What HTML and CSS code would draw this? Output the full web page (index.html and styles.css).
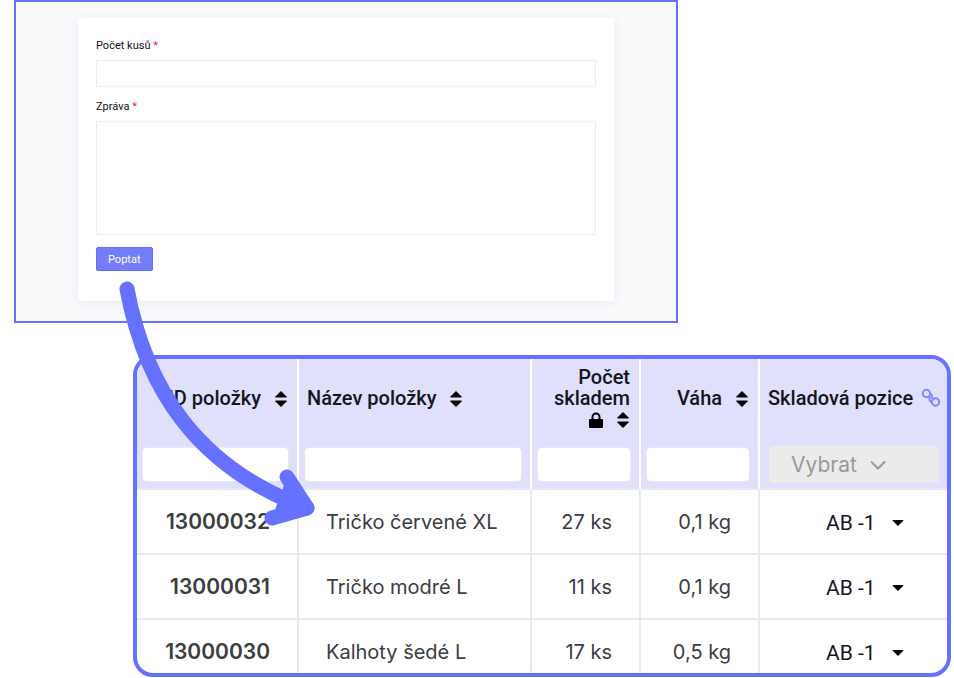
FILE: index.html
```
<!DOCTYPE html>
<html lang="cs">
    <head>
        <meta charset="UTF-8" />
        <meta name="viewport" content="width=device-width, initial-scale=1.0" />
        <title>Poptávka</title>
        <link rel="stylesheet" href="styles.css">
    </head>
    <body>
        <svg class="sprite" aria-hidden="true">
            <symbol id="sort" viewBox="0 0 14 18">
                <path d="M1.500 7 7 1.500 12.500 7zM1.500 11h11L7 16.500z" stroke="currentColor" stroke-linejoin="round" />
            </symbol>
            <symbol id="caret" viewBox="0 0 12 6">
                <path d="M1 .5h10L6 5.500z" stroke="currentColor" stroke-linejoin="round" />
            </symbol>
        </svg>
        <main>
            <section class="preview">
                <form class="card">
                    <label for="count">Počet kusů <span class="required">*</span></label>
                    <input type="text" id="count" />
                    <label for="message">Zpráva <span class="required">*</span></label>
                    <textarea id="message"></textarea>
                    <button type="button">Poptat</button>
                </form>
            </section>

            <section class="stock">
                <table>
                    <colgroup>
                        <col class="col-id" />
                        <col />
                        <col class="col-count" />
                        <col class="col-weight" />
                        <col class="col-position" />
                    </colgroup>
                    <thead>
                        <tr class="titles">
                            <th class="right">ID položky <svg class="sort"><use href="#sort" /></svg></th>
                            <th>Název položky <svg class="sort"><use href="#sort" /></svg></th>
                            <th class="right">
                                Počet<br />skladem<br />
                                <svg class="lock" viewBox="0 0 14 16">
                                    <path d="M3.500 8V5a3.500 3.500 0 0 1 7 0v3" fill="none" stroke="currentColor" stroke-width="2" />
                                    <rect y="7" width="14" height="9" rx="1" />
                                </svg>
                                <svg class="sort"><use href="#sort" /></svg>
                            </th>
                            <th class="right">Váha <svg class="sort"><use href="#sort" /></svg></th>
                            <th>
                                <span class="linked">
                                    Skladová pozice
                                    <svg class="link" viewBox="0 0 20 20">
                                        <circle cx="5.500" cy="5.500" r="3.700" />
                                        <circle cx="14.500" cy="14" r="3.700" />
                                        <path d="M9 5.500c2 1 2.500 3 1.500 5M10.500 14c-2-1-2.500-3-1.500-5" />
                                    </svg>
                                </span>
                            </th>
                        </tr>
                        <tr class="filters">
                            <th><input type="text" aria-label="Filtr ID položky" /></th>
                            <th><input type="text" aria-label="Filtr názvu položky" /></th>
                            <th><input type="text" aria-label="Filtr počtu skladem" /></th>
                            <th><input type="text" aria-label="Filtr váhy" /></th>
                            <th>
                                <div class="pick">
                                    <select aria-label="Filtr skladové pozice" disabled>
                                        <option>Vybrat</option>
                                    </select>
                                    <svg class="chevron" viewBox="0 0 16 10"><path d="m1 1.500 7 7 7-7" /></svg>
                                </div>
                            </th>
                        </tr>
                    </thead>
                    <tbody>
                        <tr>
                            <td class="id">13000032</td>
                            <td class="name">Tričko červené XL</td>
                            <td class="number">27 ks</td>
                            <td class="number">0,1 kg</td>
                            <td class="position">
                                <div class="pick">
                                    <select aria-label="Skladová pozice 13000032"><option>AB -1</option></select>
                                    <svg class="caret"><use href="#caret" /></svg>
                                </div>
                            </td>
                        </tr>
                        <tr>
                            <td class="id">13000031</td>
                            <td class="name">Tričko modré L</td>
                            <td class="number">11 ks</td>
                            <td class="number">0,1 kg</td>
                            <td class="position">
                                <div class="pick">
                                    <select aria-label="Skladová pozice 13000031"><option>AB -1</option></select>
                                    <svg class="caret"><use href="#caret" /></svg>
                                </div>
                            </td>
                        </tr>
                        <tr>
                            <td class="id">13000030</td>
                            <td class="name">Kalhoty šedé L</td>
                            <td class="number">17 ks</td>
                            <td class="number">0,5 kg</td>
                            <td class="position">
                                <div class="pick">
                                    <select aria-label="Skladová pozice 13000030"><option>AB -1</option></select>
                                    <svg class="caret"><use href="#caret" /></svg>
                                </div>
                            </td>
                        </tr>
                    </tbody>
                </table>
            </section>

            <!-- arrow from the form button to the first row -->
            <svg class="arrow" viewBox="0 0 200 248" aria-hidden="true">
                <path d="M9 8C28 109 80 187 189 227" />
                <path d="M169 196l20 31-35 10" />
                <path class="tip" d="M169 196l20 31-35 10z" />
            </svg>
        </main>
    </body>
</html>
```

FILE: styles.css
```
* {
    box-sizing: border-box;
}
body {
    margin: 0;
    background-color: white;
    font-family: Inter, Roboto, sans-serif;
}
main {
    position: relative;
}
.sprite {
    display: none;
}
svg {
    fill: currentColor;
}

/* form */
.preview {
    margin: 0 276px 32px 14px;
    padding: 16px 62px 20px;
    border: 2px solid #6672fb;
    background-color: #f8fafc;
}
.card {
    display: flex;
    flex-direction: column;
    padding: 21px 18px 30px;
    border-radius: 2px;
    background-color: white;
    box-shadow: 0 2px 12px rgba(60, 60, 110, 0.08);
}
.card label {
    margin-bottom: 7px;
    font-family: Roboto, sans-serif;
    font-size: 11px;
    line-height: 14px;
    color: #111;
}
.required {
    color: #f22;
}
.card input,
.card textarea {
    width: 100%;
    height: 27px;
    margin: 0 0 13px;
    border: 1px solid #ebebf2;
    border-radius: 1px;
    background-color: white;
    resize: none;
}
.card textarea {
    height: 114px;
    margin-bottom: 12px;
}
.card button {
    align-self: flex-start;
    height: 24px;
    padding: 0 11px;
    border: 1px solid #646ef0;
    border-radius: 2px;
    background-color: #737df8;
    font-family: Roboto, sans-serif;
    font-size: 11px;
    color: white;
}

/* table */
.stock {
    margin: 0 3px 0 133px;
    border: 4px solid #6672ff;
    border-radius: 20px;
    overflow: hidden;
}
table {
    width: 100%;
    table-layout: fixed;
    border-collapse: separate;
    border-spacing: 0;
    font-size: 20px;
    line-height: 24px;
    color: #3a3d42;
}
.col-id {
    width: 162px;
}
.col-count {
    width: 109px;
}
.col-weight {
    width: 119px;
}
.col-position {
    width: 187px;
}
th {
    border-right: 2px solid white;
    background-color: #e0e0fd;
    text-align: left;
}
td {
    padding: 20px 27px 19px;
    border-right: 2px solid #e8eaf2;
    border-bottom: 2px solid #e8eaf2;
    vertical-align: top;
    white-space: nowrap;
}
th:last-child,
td:last-child {
    border-right: 0;
}
tbody tr:last-child td {
    padding-bottom: 8px;
    border-bottom: 0;
}
.titles th {
    padding: 8px 9px 9px 8px;
    font-family: Roboto, sans-serif;
    font-size: 20px;
    font-weight: 500;
    line-height: 21px;
    color: #15151c;
    white-space: nowrap;
}
.titles .right,
.id,
.number {
    text-align: right;
}
.sort {
    width: 14px;
    height: 18px;
    margin-left: 8px;
    vertical-align: -3px;
    color: black;
}
.lock {
    width: 14px;
    height: 16px;
    vertical-align: -2px;
    color: black;
}
.linked {
    display: flex;
    gap: 8px;
}
.link {
    flex: none;
    width: 20px;
    height: 20px;
    fill: none;
    stroke: #8088ff;
    stroke-width: 2;
}
.titles th:last-child {
    padding-right: 4px;
}
.filters th {
    padding: 7px 8px 5px 5px;
    border-bottom: 2px solid #e8eaf2;
}
.filters th:last-child {
    padding-left: 9px;
}
.filters input {
    display: block;
    width: 100%;
    height: 35px;
    border: 1px solid #e8e8f0;
    border-radius: 5px;
    background-color: white;
}
.id {
    padding-right: 27px;
    padding-left: 0;
    font-size: 21px;
    font-weight: 600;
}
.position {
    padding: 21px 0 0 66px;
}
.pick {
    display: grid;
    align-items: center;
}
.pick select,
.pick svg {
    grid-area: 1 / 1;
}
.pick svg {
    pointer-events: none;
}
.pick select {
    appearance: none;
    width: 100%;
    padding: 0;
    border: 0;
    background-color: transparent;
    font-family: Roboto, sans-serif;
    font-size: 21px;
    line-height: 24px;
    color: #15151c;
}
.filters .pick select {
    height: 37px;
    padding-left: 22px;
    border-radius: 4px;
    background-color: #ebebeb;
    font-family: Inter, sans-serif;
    color: #999;
    opacity: 1;
}
.chevron {
    width: 16px;
    height: 10px;
    margin-left: 101px;
    fill: none;
    stroke: #999;
    stroke-width: 2;
}
.caret {
    width: 12px;
    height: 6px;
    margin-left: 66px;
    color: black;
}

.arrow {
    position: absolute;
    top: 281px;
    left: 118px;
    width: 200px;
    height: 248px;
    fill: none;
    stroke: #6672ff;
    stroke-width: 15;
    stroke-linecap: round;
    stroke-linejoin: round;
    pointer-events: none;
}
.arrow .tip {
    fill: #6672ff;
    stroke: none;
}
```
